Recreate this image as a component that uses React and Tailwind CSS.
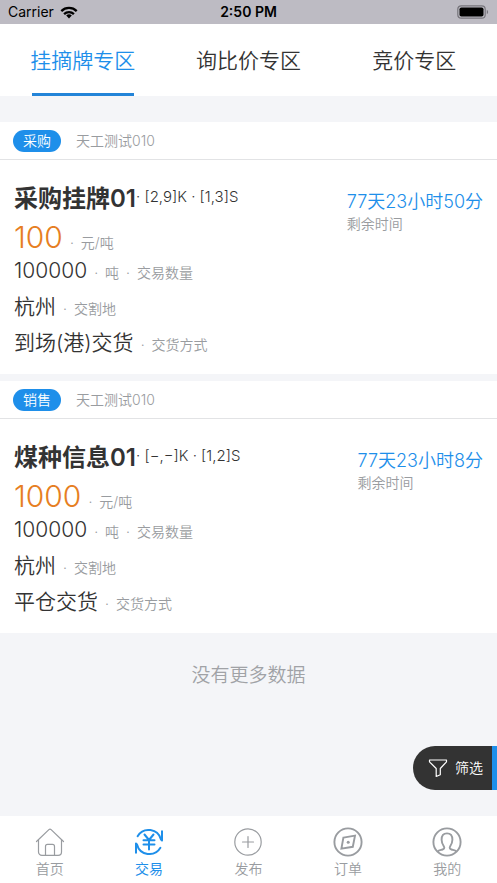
import React, { useState } from 'react';

const tabs = ['挂摘牌专区', '询比价专区', '竞价专区'];

const offers = [
  {
    id: 1,
    type: '采购',
    company: '天工测试010',
    title: '采购挂牌01',
    spec: '· [2,9]K · [1,3]S',
    price: '100',
    amount: '100000',
    place: '杭州',
    delivery: '到场(港)交货',
    remain: '77天23小时50分',
  },
  {
    id: 2,
    type: '销售',
    company: '天工测试010',
    title: '煤种信息01',
    spec: '· [−,−]K · [1,2]S',
    price: '1000',
    amount: '100000',
    place: '杭州',
    delivery: '平仓交货',
    remain: '77天23小时8分',
  },
];

function HomeIcon() {
  return (
    <svg viewBox="0 0 30 30" className="w-[30px] h-[30px]" fill="none" stroke="currentColor" strokeWidth="1.2" strokeLinecap="round" strokeLinejoin="round">
      <path d="M1.5 14.5L13.9 2.6a1.6 1.6 0 0 1 2.2 0L28.5 14.5" />
      <path d="M3.5 12.8V25a3.4 3.4 0 0 0 3.4 3.4h16.2a3.4 3.4 0 0 0 3.4-3.4V12.8" />
      <path d="M10.5 28.2V19.4a2 2 0 0 1 2-2h5a2 2 0 0 1 2 2v8.8" />
    </svg>
  );
}

function TradeIcon() {
  return (
    <svg viewBox="0 0 30 30" className="w-[30px] h-[30px]" fill="none" stroke="currentColor" strokeWidth="2" strokeLinecap="round" strokeLinejoin="round">
      <path d="M3.6 9.2A12.8 12.8 0 0 1 27 12.6L28 13.5V4.2" />
      <path d="M26.4 20.8A12.8 12.8 0 0 1 3 17.4L2 16.5V25.8" />
      <path d="M10.5 7.5l4.5 5.5L19.5 7.5M9.5 13.2h11M9.5 17.4h11M15 13v9.5" />
    </svg>
  );
}

function PublishIcon() {
  return (
    <svg viewBox="0 0 30 30" className="w-[30px] h-[30px]" fill="none" stroke="currentColor" strokeWidth="1.2" strokeLinecap="round">
      <circle cx="15" cy="15" r="13.2" />
      <path d="M15 9.5v11M9.5 15h11" />
    </svg>
  );
}

function OrderIcon() {
  return (
    <svg viewBox="0 0 30 30" className="w-[30px] h-[30px]" fill="none" stroke="currentColor" strokeWidth="1.9">
      <circle cx="15" cy="15" r="13.6" />
      <path d="M10.4 10.6L22 8.6L19.8 19.8L8.4 21.6Z" />
      <circle cx="15.2" cy="15.2" r="1.5" fill="currentColor" stroke="none" />
    </svg>
  );
}

function MineIcon() {
  return (
    <svg viewBox="0 0 30 30" className="w-[30px] h-[30px]" fill="none" stroke="currentColor" strokeWidth="1.9" strokeLinejoin="round">
      <circle cx="15" cy="15" r="13.6" />
      <path d="M5.6 24.6c1.2-1.5 3-1.5 4.9-2.1c1.6-.5 2.3-1.5 1.4-3c-1.3-1.9-2.3-4-2.3-6.8c0-3.8 2.1-6.3 5.4-6.3s5.4 2.5 5.4 6.3c0 2.8-1 4.9-2.3 6.8c-.9 1.5-.2 2.5 1.4 3c1.9.6 3.7.6 4.9 2.1" />
    </svg>
  );
}

const navItems = [
  { name: '首页', Icon: HomeIcon },
  { name: '交易', Icon: TradeIcon },
  { name: '发布', Icon: PublishIcon },
  { name: '订单', Icon: OrderIcon },
  { name: '我的', Icon: MineIcon },
];

function StatusBar() {
  return (
    <div className="grid grid-cols-3 items-center h-6 px-2 bg-[#bdbbc3] text-black text-sm font-normal">
      <div className="flex items-center gap-1.5">
        <span>Carrier</span>
        <svg viewBox="0 0 18 13" className="w-[18px] h-[13px]" fill="none" stroke="currentColor" strokeWidth="2.3">
          <path d="M1.3 5.1a11 11 0 0 1 15.4 0" />
          <path d="M4.1 8.1a7 7 0 0 1 9.8 0" />
          <path d="M9 12.5L6.2 9.6a4 4 0 0 1 5.6 0Z" fill="currentColor" stroke="none" />
        </svg>
      </div>
      <span className="text-center font-semibold">2:50 PM</span>
      <svg viewBox="0 0 32 14" className="w-8 h-3.5 justify-self-end">
        <rect x="0.8" y="0.8" width="27.4" height="12.4" rx="3.5" fill="none" stroke="#77757c" strokeWidth="1.2" />
        <rect x="2.5" y="2.5" width="24" height="9" rx="1.8" fill="#000" />
        <path d="M29.8 4.8a2.5 2.5 0 0 1 0 4.4z" fill="#77757c" />
      </svg>
    </div>
  );
}

function OfferRow({ value, labels, className }) {
  return (
    <div className={`flex items-baseline gap-[7px] ${className}`}>
      <span>{value}</span>
      {labels.map((label) => (
        <span key={label} className="flex gap-[7px] text-sm text-[#999ca0]">
          <span>·</span>
          <span>{label}</span>
        </span>
      ))}
    </div>
  );
}

function OfferCard({ offer }) {
  return (
    <article className="bg-white">
      <div className="flex items-center gap-[15px] h-[38px] px-[13px] border-b border-[#e2e3e5] text-sm">
        <span className="w-12 h-[22px] leading-[22px] rounded-full bg-[#1e8fea] text-white text-center">{offer.type}</span>
        <span className="text-[#999ca0]">{offer.company}</span>
      </div>
      <div className="flex justify-between px-3.5 pt-[21px] pb-[13px]">
        <div>
          <div className="flex">
            <h2 className="text-2xl leading-9 font-semibold">{offer.title}</h2>
            <span className="text-[15px] leading-8">{offer.spec}</span>
          </div>
          <OfferRow value={offer.price} labels={['元/吨']} className="text-[30px] leading-10 text-[#e67e22]" />
          <OfferRow value={offer.amount} labels={['吨', '交易数量']} className="text-[21px] leading-7 pb-1" />
          <OfferRow value={offer.place} labels={['交割地']} className="text-[21px] leading-9" />
          <OfferRow value={offer.delivery} labels={['交货方式']} className="text-[21px] leading-9" />
        </div>
        <div className="pt-2">
          <p className="text-lg leading-[25px] text-[#1e8fea]">{offer.remain}</p>
          <p className="text-sm text-[#999ca0]">剩余时间</p>
        </div>
      </div>
    </article>
  );
}

export default function App() {
  const [tab, setTab] = useState(0);
  const [page, setPage] = useState('交易');

  return (
    <div className="relative min-h-screen flex flex-col bg-[#f4f5f8] text-[#333] font-[350] font-['Inter','Noto_Sans_CJK_SC',sans-serif]">
      <StatusBar />

      <div className="grid grid-cols-3 h-[72px] bg-white">
        {tabs.map((name, i) => (
          <button
            key={name}
            type="button"
            onClick={() => setTab(i)}
            className={`flex flex-col items-center justify-between text-[21px] ${tab === i ? 'text-[#1e8fea]' : ''}`}
          >
            <span className="pt-[21px]">{name}</span>
            <span className={`w-[102px] h-[3px] ${tab === i ? 'bg-[#2384d8]' : ''}`} />
          </button>
        ))}
      </div>

      <main className="flex flex-col gap-[7px] pt-[26px]">
        {offers.map((offer) => (
          <OfferCard key={offer.id} offer={offer} />
        ))}
      </main>

      <p className="py-[29px] text-center text-[19px] text-[#a0a2a6]">没有更多数据</p>

      <button
        type="button"
        className="absolute right-0 bottom-[93px] flex items-center gap-[7px] h-11 pl-[15px] pr-[9px] rounded-l-full bg-[#333] border-r-[5px] border-[#1e8fea] text-white text-sm"
      >
        <svg viewBox="0 0 20 20" className="w-5 h-5" fill="none" stroke="currentColor" strokeWidth="1.2" strokeLinejoin="round">
          <path d="M1.5 2h17v1.8L12.3 10.5v6.2L8.2 18.5v-8L1.5 3.8Z" />
        </svg>
        筛选
      </button>

      <nav className="grid grid-cols-5 h-[67px] mt-auto bg-white text-sm">
        {navItems.map(({ name, Icon }) => (
          <button
            key={name}
            type="button"
            onClick={() => setPage(name)}
            className={`flex flex-col items-center pt-[11px] gap-0.5 ${page === name ? 'text-[#1e8fea] font-normal' : 'text-[#999ca0]'}`}
          >
            <Icon />
            <span>{name}</span>
          </button>
        ))}
      </nav>
    </div>
  );
}
